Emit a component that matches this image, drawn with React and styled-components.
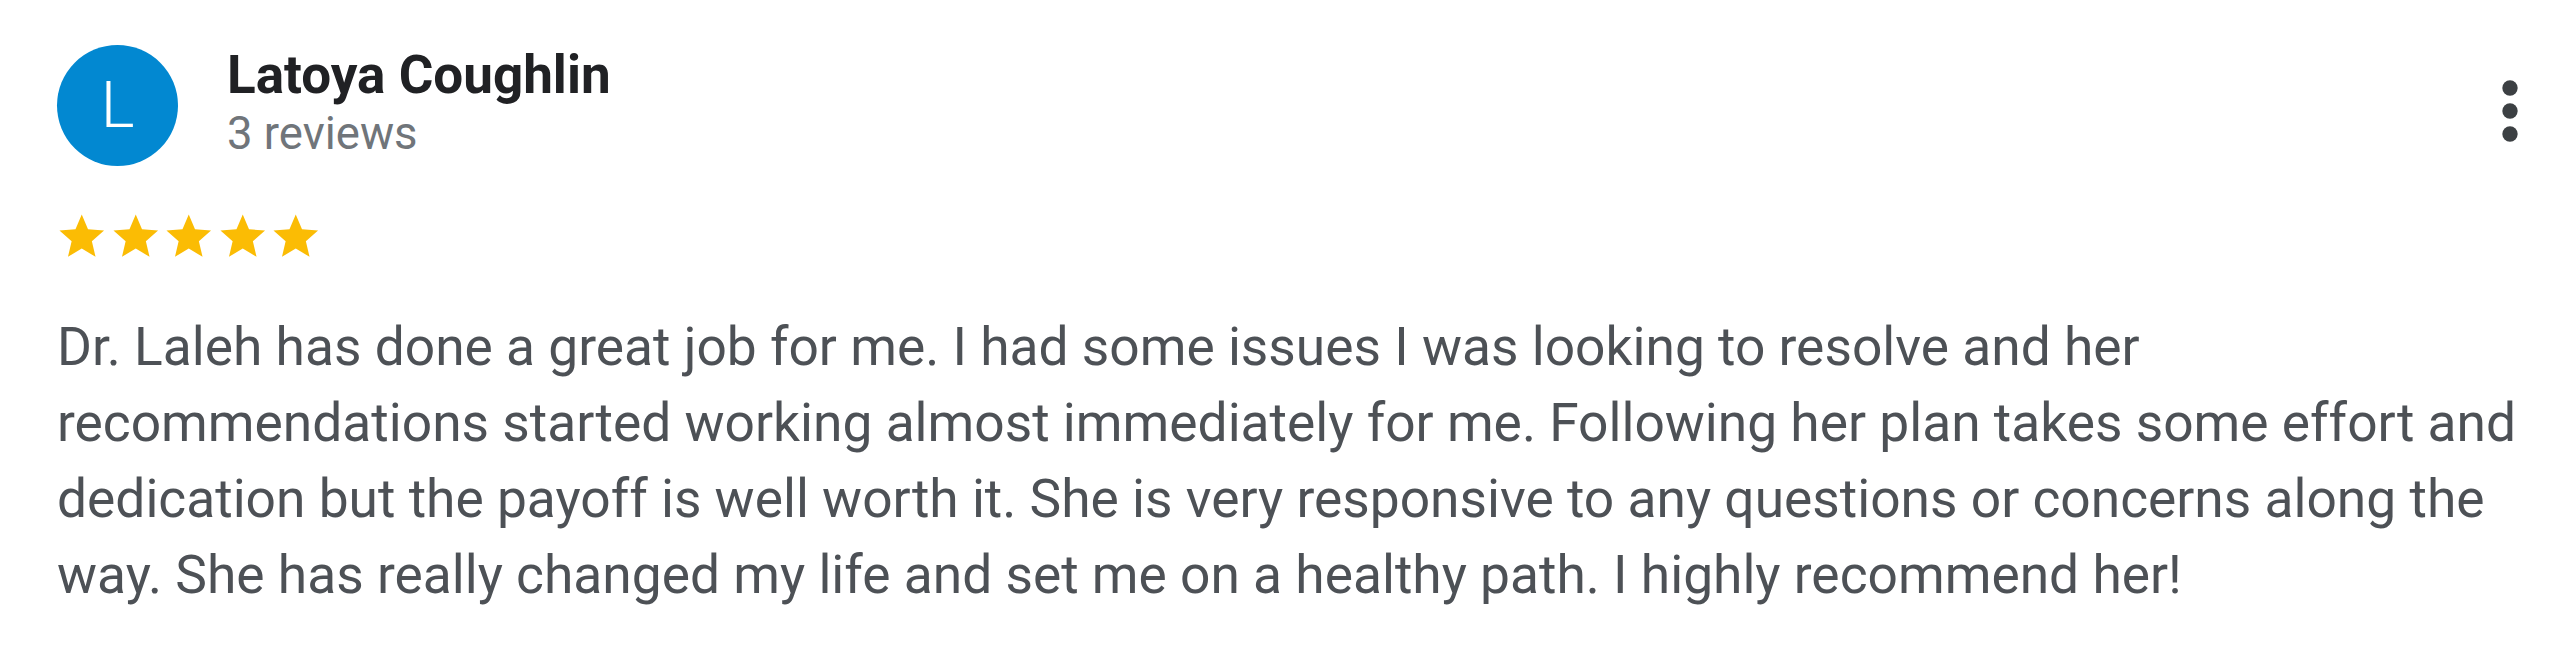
import React from 'react';
import styled, { createGlobalStyle } from 'styled-components';

const GlobalStyle = createGlobalStyle`
  html, body {
    margin: 0;
    padding: 0;
    background: #ffffff;
  }
  body {
    font-family: Roboto, "Liberation Sans", Arial, sans-serif;
  }
`;

const review = {
  initial: 'L',
  name: 'Latoya Coughlin',
  count: '3 reviews',
  rating: 5,
  lines: [
    'Dr. Laleh has done a great job for me. I had some issues I was looking to resolve and her',
    'recommendations started working almost immediately for me. Following her plan takes some effort and',
    'dedication but the payoff is well worth it. She is very responsive to any questions or concerns along the',
    'way. She has really changed my life and set me on a healthy path. I highly recommend her!',
  ],
};

function Star() {
  return (
    <StarIcon viewBox="0 0 24 24">
      <path d="M12 17.27L18.18 21l-1.64-7.03L22 9.24l-7.19-.61L12 2 9.19 8.63 2 9.24l5.46 4.73L5.82 21z" />
    </StarIcon>
  );
}

function MoreIcon() {
  return (
    <DotsIcon viewBox="0 0 24 24">
      <circle cx="12" cy="6" r="2" />
      <circle cx="12" cy="12" r="2" />
      <circle cx="12" cy="18" r="2" />
    </DotsIcon>
  );
}

export default function App() {
  return (
    <>
      <GlobalStyle />
      <Card>
        <Header>
          <Avatar>{review.initial}</Avatar>
          <Author>
            <Name>{review.name}</Name>
            <Count>{review.count}</Count>
          </Author>
          <MenuButton aria-label="More">
            <MoreIcon />
          </MenuButton>
        </Header>
        <Stars>
          {Array.from({ length: review.rating }).map((_, i) => (
            <Star key={i} />
          ))}
        </Stars>
        <Body>
          {review.lines.map((line, i) => (
            <Line key={i}>{line}</Line>
          ))}
        </Body>
      </Card>
    </>
  );
}

const Card = styled.div`
  box-sizing: border-box;
  width: 2560px;
  height: 668px;
  padding: 45px 0 0 57px;
  background: #fff;
`;

const Header = styled.div`
  display: flex;
  align-items: flex-start;
`;

const Avatar = styled.div`
  flex: none;
  width: 121px;
  height: 121px;
  border-radius: 50%;
  background: #0288d1;
  color: #fff;
  display: flex;
  align-items: center;
  justify-content: center;
  font-size: 64px;
  font-weight: 300;
`;

const Author = styled.div`
  display: flex;
  flex-direction: column;
  margin-left: 49px;
  padding-top: 2px;
  flex: 1;
`;

const Name = styled.div`
  font-size: 53px;
  font-weight: 700;
  line-height: 56px;
  color: #202124;
`;

const Count = styled.div`
  font-size: 45.5px;
  line-height: 62px;
  color: #70757a;
`;

const MenuButton = styled.button`
  flex: none;
  border: none;
  background: none;
  padding: 0;
  margin: 20px 4px 0 0;
  width: 92px;
  height: 92px;
  cursor: pointer;
`;

const DotsIcon = styled.svg`
  display: block;
  width: 92px;
  height: 92px;
  fill: #3c4043;
`;

const Stars = styled.div`
  display: flex;
  margin: 44px 0 0 -2px;
`;

const StarIcon = styled.svg`
  display: block;
  width: 53.5px;
  height: 53.5px;
  fill: #fbbc04;
`;

const Body = styled.div`
  margin-top: 45.5px;
  font-size: 53.3px;
  line-height: 76px;
  color: #4d5156;
`;

const Line = styled.span`
  display: block;
  white-space: nowrap;
`;
